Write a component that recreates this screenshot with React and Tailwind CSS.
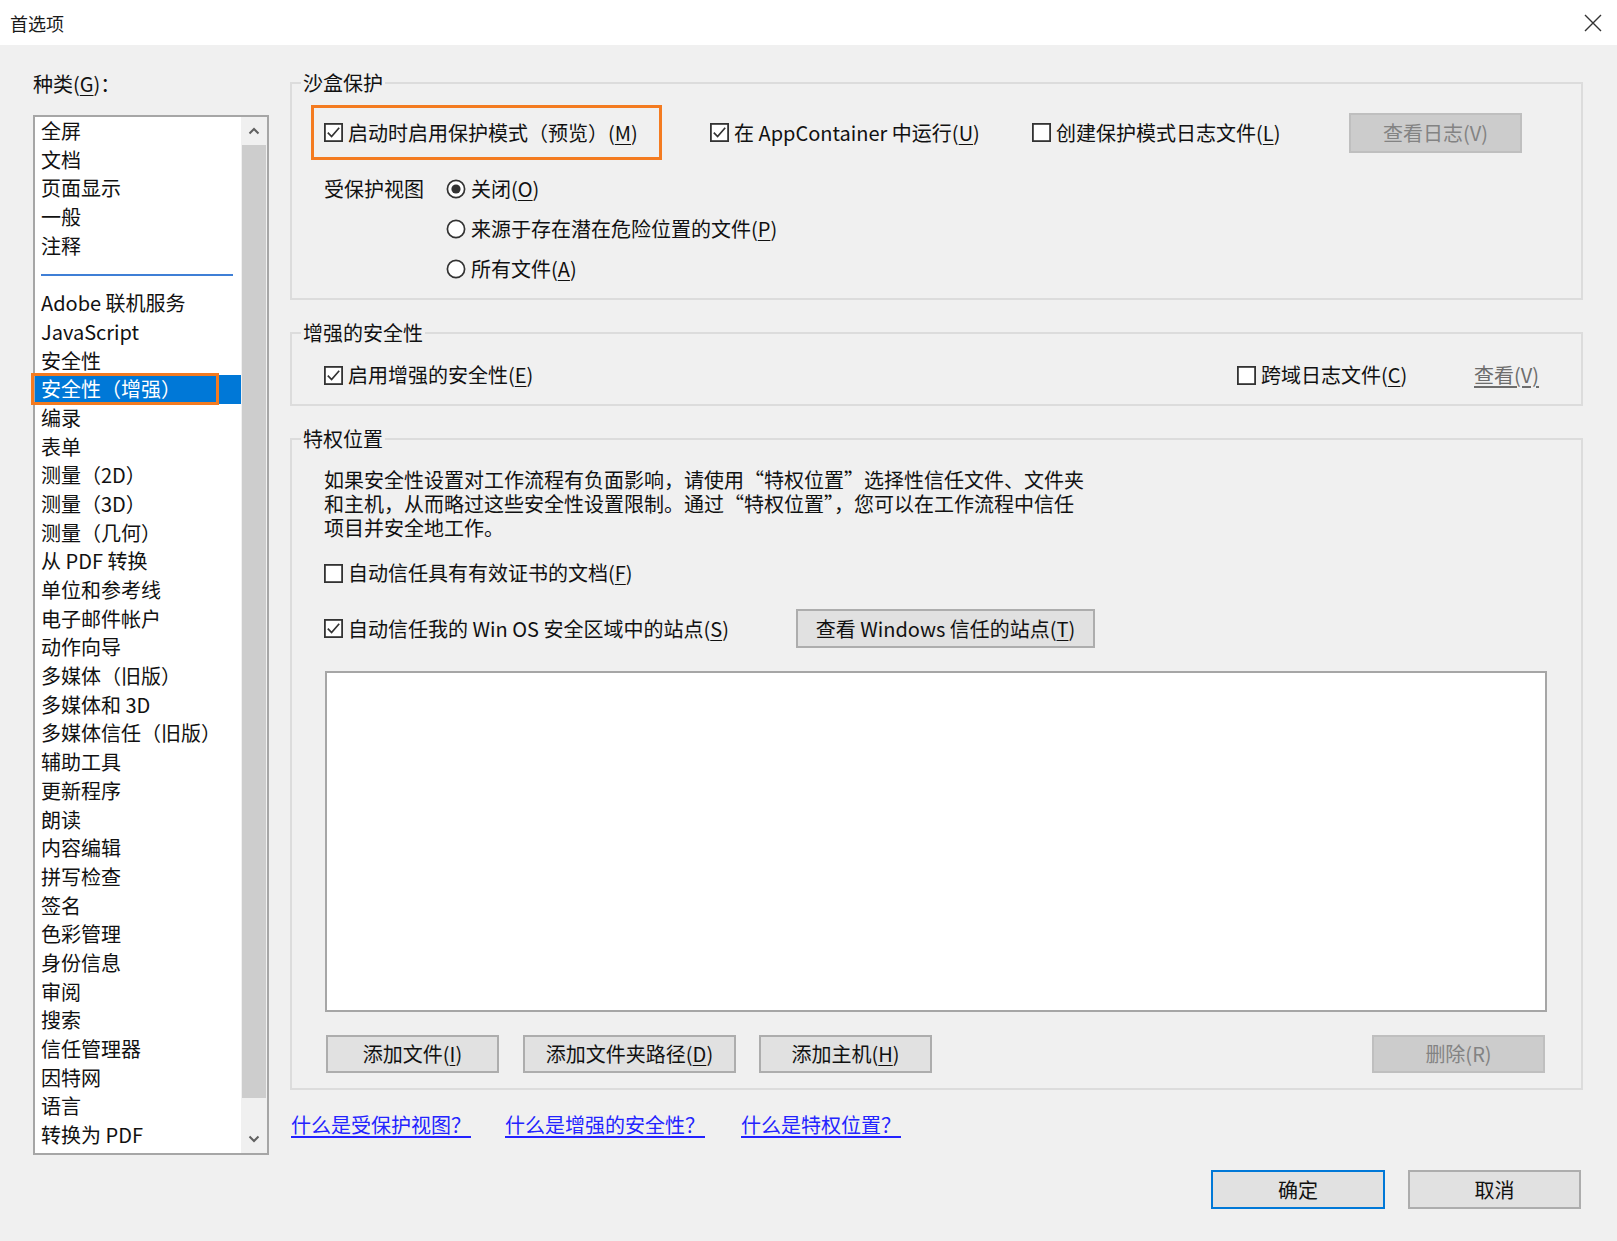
import React from "react";

function U({ children }) {
  return <span className="underline underline-offset-[3px] decoration-[1px]">{children}</span>;
}

function Check({ checked }) {
  return (
    <svg width="19" height="19" viewBox="0 0 19 19" className="shrink-0">
      <rect x="0.9" y="0.9" width="17.2" height="17.2" fill="#ffffff" stroke="#333333" strokeWidth="1.8" />
      {checked && <path d="M3.8 9.6 L7.6 13.6 L15.2 4.8" fill="none" stroke="#333333" strokeWidth="1.7" />}
    </svg>
  );
}

function Radio({ checked }) {
  return (
    <svg width="20" height="20" viewBox="0 0 20 20" className="shrink-0">
      <circle cx="10" cy="10" r="8.6" fill="#ffffff" stroke="#333333" strokeWidth="1.7" />
      {checked && <circle cx="10" cy="10" r="4.6" fill="#333333" />}
    </svg>
  );
}

function CheckLabel({ checked, children }) {
  return (
    <div className="flex items-center gap-[5px] whitespace-nowrap">
      <Check checked={checked} />
      <span>{children}</span>
    </div>
  );
}

function Btn({ children, className = "", disabled = false }) {
  return (
    <div
      className={
        "flex items-center justify-center whitespace-nowrap border-2 " +
        (disabled ? "bg-[#cccccc] border-[#bfbfbf] text-[#838383] " : "bg-[#e1e1e1] border-[#adadad] text-[#111111] ") +
        className
      }
    >
      {children}
    </div>
  );
}

const items = [
  "全屏",
  "文档",
  "页面显示",
  "一般",
  "注释",
  "__sep",
  "Adobe 联机服务",
  "JavaScript",
  "安全性",
  "__sel",
  "编录",
  "表单",
  "测量（2D）",
  "测量（3D）",
  "测量（几何）",
  "从 PDF 转换",
  "单位和参考线",
  "电子邮件帐户",
  "动作向导",
  "多媒体（旧版）",
  "多媒体和 3D",
  "多媒体信任（旧版）",
  "辅助工具",
  "更新程序",
  "朗读",
  "内容编辑",
  "拼写检查",
  "签名",
  "色彩管理",
  "身份信息",
  "审阅",
  "搜索",
  "信任管理器",
  "因特网",
  "语言",
  "转换为 PDF",
];

function CategoryList() {
  return (
    <div className="flex h-[1040px] border-2 border-[#a6a6a6] bg-white">
      <div className="flex-1 flex flex-col">
        {items.map((it, i) => {
          if (it === "__sep")
            return (
              <div key={i} className="h-[28.7px] flex items-center">
                <div className="ml-[6px] w-[192px] h-[2px] bg-[#3f7fd6]" />
              </div>
            );
          if (it === "__sel")
            return (
              <div key={i} className="relative h-[28.7px] leading-[28.7px] bg-[#0078d7] text-white pl-[6px]">
                安全性（增强）
                <div className="absolute left-[-4px] top-[-2px] w-[188px] h-[32px] border-[3px] border-[#f47b20]" />
              </div>
            );
          return (
            <div key={i} className="h-[28.7px] leading-[28.7px] pl-[6px] whitespace-nowrap">
              {it}
            </div>
          );
        })}
      </div>
      <div className="w-[26px] flex flex-col bg-[#f0f0f0]">
        <div className="h-[28px] flex items-center justify-center">
          <svg width="12" height="8" viewBox="0 0 12 8">
            <path d="M1.5 6.5 L6 2 L10.5 6.5" fill="none" stroke="#606060" strokeWidth="2" />
          </svg>
        </div>
        <div className="h-[953px] mx-[1px] bg-[#cdcdcd]" />
        <div className="flex-1" />
        <div className="h-[28px] flex items-center justify-center">
          <svg width="12" height="8" viewBox="0 0 12 8">
            <path d="M1.5 1.5 L6 6 L10.5 1.5" fill="none" stroke="#606060" strokeWidth="2" />
          </svg>
        </div>
      </div>
    </div>
  );
}

export default function App() {
  return (
    <div className="w-[1617px] min-h-[1241px] bg-[#f0f0f0] text-[20px] text-[#111111] font-['Noto_Sans_CJK_SC','Noto_Sans',sans-serif]">
      {/* Title bar */}
      <div className="h-[45px] bg-white flex items-center justify-between pl-[10px] pr-[15px]">
        <span className="text-[18px] leading-[24px] text-[#1a1a1a]">首选项</span>
        <svg width="18" height="18" viewBox="0 0 18 18">
          <path d="M1 1 L17 17 M17 1 L1 17" stroke="#333333" strokeWidth="1.4" />
        </svg>
      </div>

      {/* Body */}
      <div className="flex pl-[33px]">
        {/* Left column */}
        <div className="w-[236px]">
          <div className="mt-[27px] leading-[24px]">
            种类(<U>G</U>)：
          </div>
          <div className="mt-[19px]">
            <CategoryList />
          </div>
        </div>

        {/* Right column */}
        <div className="ml-[21px] w-[1293px] pt-[26px]">
          {/* 沙盒保护 */}
          <fieldset className="border-2 border-[#dcdcdc] pb-[9px]">
            <legend className="ml-[9px] px-[2px] leading-[24px]">沙盒保护</legend>
            <div className="mt-[10px] flex items-center pl-[19px]">
              <div className="w-[351px] h-[55px] border-[3px] border-[#f47b20] flex items-center pl-[10px]">
                <CheckLabel checked>
                  启动时启用保护模式（预览）(<U>M</U>)
                </CheckLabel>
              </div>
              <div className="ml-[48px] w-[322px]">
                <CheckLabel checked>
                  在 AppContainer 中运行(<U>U</U>)
                </CheckLabel>
              </div>
              <div className="w-[317px]">
                <CheckLabel>
                  创建保护模式日志文件(<U>L</U>)
                </CheckLabel>
              </div>
              <Btn disabled className="w-[173px] h-[40px]">
                查看日志(V)
              </Btn>
            </div>
            <div className="mt-[9px] flex pl-[32px]">
              <div className="w-[122px] leading-[40px]">受保护视图</div>
              <div className="flex flex-col">
                <div className="h-[40px] flex items-center gap-[5px]">
                  <Radio checked />
                  <span>
                    关闭(<U>O</U>)
                  </span>
                </div>
                <div className="h-[40px] flex items-center gap-[5px]">
                  <Radio />
                  <span>
                    来源于存在潜在危险位置的文件(<U>P</U>)
                  </span>
                </div>
                <div className="h-[40px] flex items-center gap-[5px]">
                  <Radio />
                  <span>
                    所有文件(<U>A</U>)
                  </span>
                </div>
              </div>
            </div>
          </fieldset>

          {/* 增强的安全性 */}
          <fieldset className="mt-[21px] border-2 border-[#dcdcdc] pb-[14px]">
            <legend className="ml-[9px] px-[2px] leading-[24px]">增强的安全性</legend>
            <div className="mt-[15px] h-[30px] flex items-center pl-[32px]">
              <div className="flex-1">
                <CheckLabel checked>
                  启用增强的安全性(<U>E</U>)
                </CheckLabel>
              </div>
              <div className="w-[237px]">
                <CheckLabel>
                  跨域日志文件(<U>C</U>)
                </CheckLabel>
              </div>
              <div className="w-[107px] text-[#6d6d6d] underline underline-offset-[3px]">查看(V)</div>
            </div>
          </fieldset>

          {/* 特权位置 */}
          <fieldset className="mt-[21px] border-2 border-[#dcdcdc] pb-[15px] pl-[32px] pr-[34px]">
            <legend className="ml-[-23px] px-[2px] leading-[24px]">特权位置</legend>
            <div className="mt-[17px] leading-[24px] whitespace-nowrap">
              如果安全性设置对工作流程有负面影响，请使用“特权位置”选择性信任文件、文件夹
              <br />
              和主机，从而略过这些安全性设置限制。通过“特权位置”，您可以在工作流程中信任
              <br />
              项目并安全地工作。
            </div>
            <div className="mt-[18px] h-[30px] flex items-center">
              <CheckLabel>
                自动信任具有有效证书的文档(<U>F</U>)
              </CheckLabel>
            </div>
            <div className="mt-[21px] flex items-center">
              <div className="w-[472px]">
                <CheckLabel checked>
                  自动信任我的 Win OS 安全区域中的站点(<U>S</U>)
                </CheckLabel>
              </div>
              <Btn className="w-[299px] h-[39px]">
                查看 Windows 信任的站点(<U>T</U>)
              </Btn>
            </div>
            <div className="mt-[23px] ml-[1px] h-[341px] bg-white border-2 border-[#a6a6a6]" />
            <div className="mt-[23px] flex items-center pl-[2px] pr-[2px]">
              <Btn className="w-[173px] h-[38px]">
                添加文件(<U>I</U>)
              </Btn>
              <Btn className="ml-[24px] w-[213px] h-[38px]">
                添加文件夹路径(<U>D</U>)
              </Btn>
              <Btn className="ml-[23px] w-[173px] h-[38px]">
                添加主机(<U>H</U>)
              </Btn>
              <Btn disabled className="ml-auto w-[173px] h-[38px]">
                删除(R)
              </Btn>
            </div>
          </fieldset>

          {/* Links */}
          <div className="mt-[22px] h-[26px] flex items-center pl-[1px] text-[#2323ff] leading-[26px]">
            <div className="w-[214px]">
              <span className="underline underline-offset-[3px]">什么是受保护视图？</span>
            </div>
            <div className="w-[236px]">
              <span className="underline underline-offset-[3px]">什么是增强的安全性？</span>
            </div>
            <div>
              <span className="underline underline-offset-[3px]">什么是特权位置？</span>
            </div>
          </div>

          {/* OK / Cancel */}
          <div className="mt-[32px] flex justify-end pr-[2px]">
            <Btn className="w-[174px] h-[39px] !border-[#0078d7]">确定</Btn>
            <Btn className="ml-[23px] w-[173px] h-[39px]">取消</Btn>
          </div>
        </div>
      </div>
    </div>
  );
}
